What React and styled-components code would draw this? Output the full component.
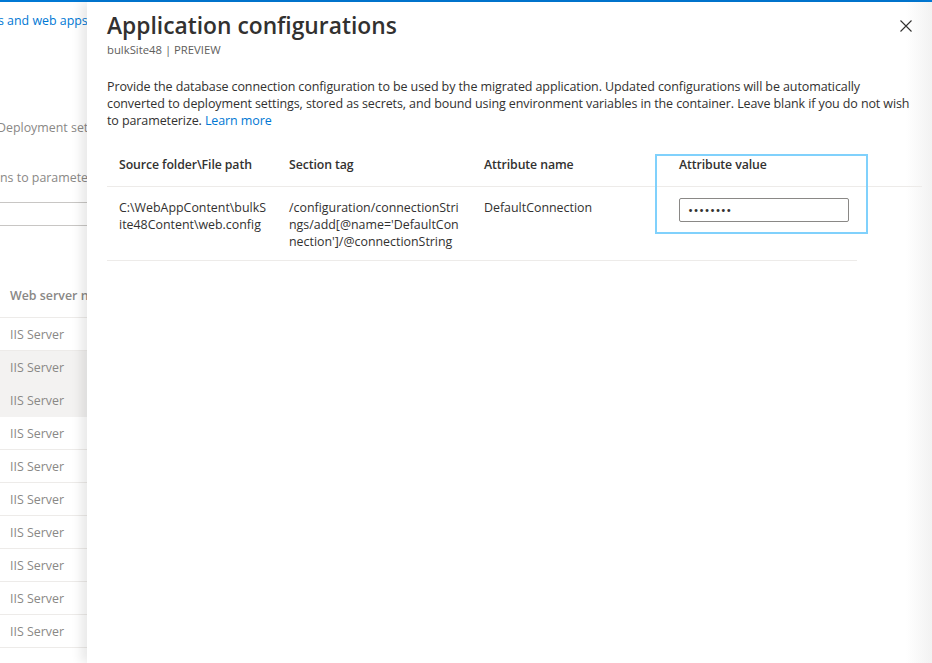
import React from 'react';
import styled, { createGlobalStyle } from 'styled-components';

const GlobalStyle = createGlobalStyle`
html, body {
  margin:0;
  padding:0;
}
body {
  font-family:"Open Sans", "Noto Sans", sans-serif;
  color:#323130;
  background:#fff;
}
* {
  box-sizing:border-box;
}
`;

const Page = styled.div`
width:932px;
height:663px;
display:flex;
flex-direction:column;
overflow:hidden;
`;
const TopBar = styled.div`
flex:none;
height:2px;
background:#0078d4;
`;
const Body = styled.div`
flex:1;
display:flex;
min-height:0;
`;

/* blade behind the flyout */
const Backdrop = styled.div`
flex:none;
width:87px;
overflow:hidden;
display:flex;
flex-direction:column;
font-size:12.4px;
line-height:18px;
white-space:nowrap;
`;
const BgLink = styled.div`
margin-top:10px;
margin-left:-2px;
color:#0078d4;
`;
const BgLabel = styled.div`
margin-top:${props => props.$top}px;
margin-left:${props => props.$shift || 0}px;
color:#8a8886;
`;
const BgDivider = styled.div`
margin-top:${props => props.$top}px;
height:1px;
background:#c8c6c4;
flex:none;
`;
const BgHeader = styled.div`
margin-top:48px;
height:44px;
flex:none;
display:flex;
align-items:center;
padding-left:10px;
border-bottom:1px solid #edebe9;
font-weight:600;
color:#8a8886;
`;
const BgRow = styled.div`
height:33px;
flex:none;
display:flex;
align-items:center;
padding:1px 0 0 10px;
color:#8a8886;
background:${props => (props.$selected ? '#f3f2f1' : 'transparent')};
border-bottom:1px solid ${props => (props.$selected ? '#f3f2f1' : '#edebe9')};
`;

/* flyout panel */
const Panel = styled.section`
flex:1;
position:relative;
z-index:1;
padding:8px 10px 0 20px;
background:linear-gradient(to right, #fff calc(100% - 26px), #f2f2f2);
box-shadow:-6px 0 10px rgba(0, 0, 0, 0.09);
`;
const Header = styled.header`
display:flex;
justify-content:space-between;
align-items:flex-start;
`;
const Title = styled.h1`
margin:0;
font-size:22.8px;
line-height:32px;
font-weight:600;
color:#323130;
`;
const Subtitle = styled.div`
font-size:11.3px;
line-height:16px;
color:#605e5c;
`;
const CloseButton = styled.button`
width:32px;
height:32px;
padding:0;
border:none;
background:none;
display:flex;
align-items:center;
justify-content:center;
color:#323130;
cursor:pointer;
`;
const Description = styled.p`
margin:20px 0 0;
max-width:812px;
font-size:12.5px;
letter-spacing:-0.1px;
line-height:17px;
`;
const Link = styled.a`
color:#0078d4;
text-decoration:none;
`;

const Table = styled.div`
position:relative;
margin-top:14px;
`;
const HeaderRow = styled.div`
display:grid;
grid-template-columns:170px 195px 195px 1fr;
height:44px;
align-items:center;
border-bottom:1px solid #edebe9;
font-size:12.3px;
letter-spacing:-0.1px;
font-weight:600;
`;
const DataRow = styled.div`
display:grid;
grid-template-columns:170px 195px 195px 190px;
width:750px;
padding:12px 0 10px;
border-bottom:1px solid #edebe9;
font-size:12.4px;
line-height:17px;
`;
const Cell = styled.div`
padding:0 12px;
`;
const Line = styled.span`
display:block;
white-space:nowrap;
`;
const ValueInput = styled.input`
display:block;
width:170px;
height:24px;
margin-top:-1px;
padding:0 8px;
border:1px solid #8a8886;
border-radius:2px;
font-family:inherit;
font-size:13.5px;
letter-spacing:0.4px;
color:#323130;
&:focus {
  outline:0;
}
`;
const FocusFrame = styled.div`
position:absolute;
left:548px;
top:11px;
width:213px;
height:80px;
border:2px solid #80d1fc;
pointer-events:none;
`;

const CloseIcon = () => (
  <svg width="12" height="12" viewBox="0 0 12 12" fill="none" stroke="currentColor" strokeWidth="1.1">
    <path d="M0.5 0.5 L11.5 11.5 M11.5 0.5 L0.5 11.5" />
  </svg>
);

const serverRows = Array.from({ length: 10 }, (_, i) => i);

const App = () => (
  <Page>
    <GlobalStyle />
    <TopBar />
    <Body>
      <Backdrop>
        <BgLink>s and web apps</BgLink>
        <BgLabel $top={89} $shift={-3}>Deployment settings</BgLabel>
        <BgLabel $top={32}>ns to parameterize</BgLabel>
        <BgDivider $top={15} />
        <BgDivider $top={22} />
        <BgHeader>Web server name</BgHeader>
        {serverRows.map(i => (
          <BgRow key={i} $selected={i === 1 || i === 2}>IIS Server</BgRow>
        ))}
      </Backdrop>
      <Panel>
        <Header>
          <div>
            <Title>Application configurations</Title>
            <Subtitle>bulkSite48 | PREVIEW</Subtitle>
          </div>
          <CloseButton aria-label="Close"><CloseIcon /></CloseButton>
        </Header>
        <Description>
          Provide the database connection configuration to be used by the migrated application. Updated configurations will be automatically
          converted to deployment settings, stored as secrets, and bound using environment variables in the container. Leave blank if you do not wish
          to parameterize. <Link href="#">Learn more</Link>
        </Description>
        <Table>
          <HeaderRow>
            <Cell>Source folder\File path</Cell>
            <Cell>Section tag</Cell>
            <Cell>Attribute name</Cell>
            <Cell>Attribute value</Cell>
          </HeaderRow>
          <DataRow>
            <Cell>
              <Line>C:\WebAppContent\bulkS</Line>
              <Line>ite48Content\web.config</Line>
            </Cell>
            <Cell>
              <Line>/configuration/connectionStri</Line>
              <Line>ngs/add[@name='DefaultCon</Line>
              <Line>nection']/@connectionString</Line>
            </Cell>
            <Cell>DefaultConnection</Cell>
            <Cell>
              <ValueInput type="password" defaultValue="12345678" />
            </Cell>
          </DataRow>
          <FocusFrame />
        </Table>
      </Panel>
    </Body>
  </Page>
);

export default App;
